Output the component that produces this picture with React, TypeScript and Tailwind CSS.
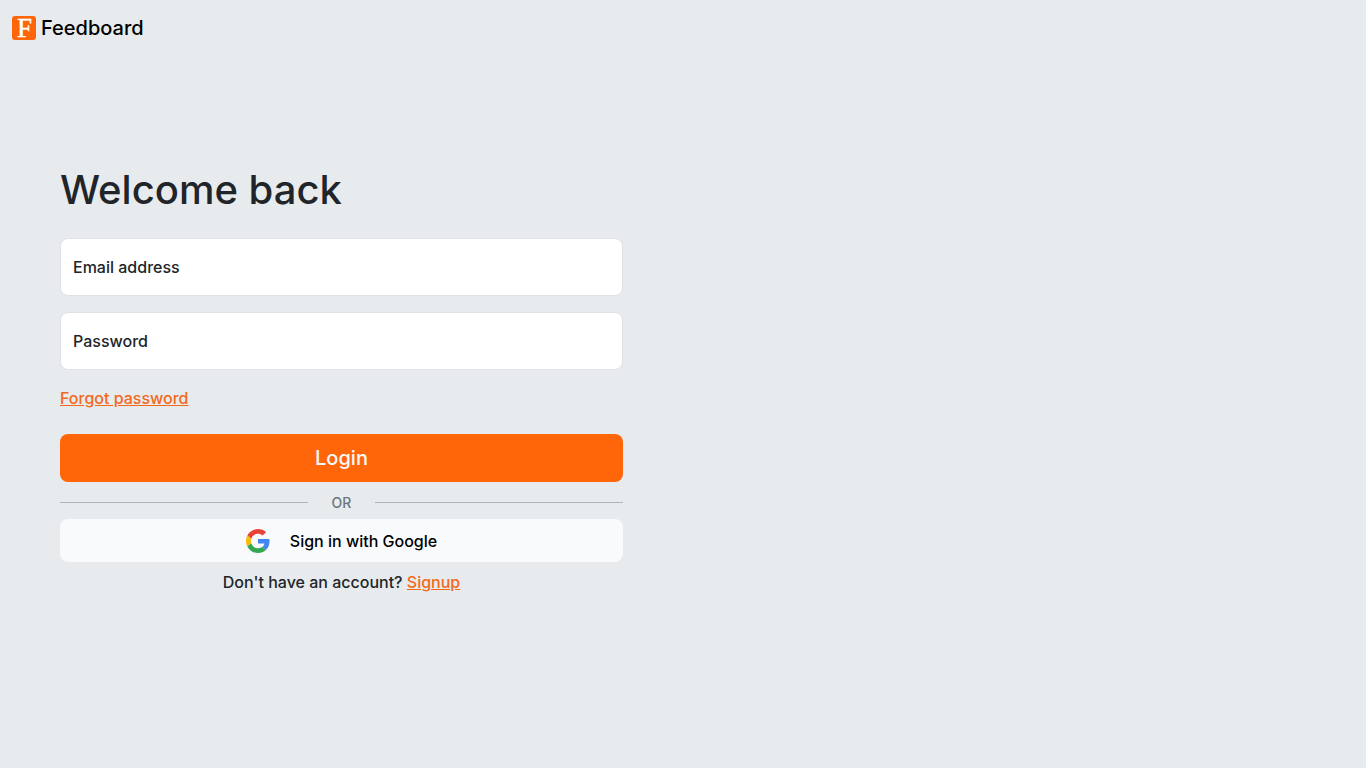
import { useId, useState } from "react";

function FeedboardLogo() {
  return (
    <svg className="size-6 overflow-visible" viewBox="0 0 24 24" aria-hidden="true">
      <rect width="24" height="24" rx="3" fill="#ff660a" />
      <text
        x="12.5"
        y="21"
        textAnchor="middle"
        fontSize="27"
        fill="#fff"
        stroke="#fff"
        strokeWidth="0.4"
        fontFamily="'Liberation Serif', serif"
      >
        F
      </text>
    </svg>
  );
}

function GoogleLogo() {
  return (
    <svg className="size-6" viewBox="0 0 48 48" aria-hidden="true">
      <path
        fill="#EA4335"
        d="M24 9.5c3.54 0 6.71 1.22 9.21 3.6l6.85-6.85C35.9 2.38 30.47 0 24 0 14.62 0 6.51 5.38 2.56 13.22l7.98 6.19C12.43 13.72 17.74 9.5 24 9.5z"
      />
      <path
        fill="#4285F4"
        d="M46.98 24.55c0-1.57-.15-3.09-.38-4.55H24v9.02h12.94c-.58 2.96-2.26 5.48-4.78 7.18l7.73 6c4.51-4.18 7.09-10.36 7.09-17.65z"
      />
      <path
        fill="#FBBC05"
        d="M10.53 28.59c-.48-1.45-.76-2.99-.76-4.59s.27-3.14.76-4.59l-7.98-6.19C.92 16.46 0 20.12 0 24c0 3.88.92 7.54 2.56 10.78l7.97-6.19z"
      />
      <path
        fill="#34A853"
        d="M24 48c6.48 0 11.93-2.13 15.89-5.81l-7.73-6c-2.15 1.45-4.92 2.3-8.16 2.3-6.26 0-11.57-4.22-13.47-9.91l-7.98 6.19C6.51 42.62 14.62 48 24 48z"
      />
    </svg>
  );
}

type FieldProps = { label: string; type: string; autoComplete: string };

function FloatingField({ label, type, autoComplete }: FieldProps) {
  const id = useId();
  const [value, setValue] = useState("");
  return (
    <div className="relative">
      <input
        id={id}
        type={type}
        autoComplete={autoComplete}
        value={value}
        onChange={(e) => setValue(e.target.value)}
        className="block h-[58px] w-full rounded-lg border border-[#dee2e6] bg-white px-3 pt-5 outline-none focus:border-[#ff660a]"
      />
      <label
        htmlFor={id}
        className={
          value
            ? "pointer-events-none absolute inset-x-[13px] top-1 text-sm"
            : "pointer-events-none absolute inset-x-[13px] inset-y-0 flex items-center"
        }
      >
        {label}
      </label>
    </div>
  );
}

export default function App() {
  return (
    <div className="flex min-h-screen flex-col bg-[#e7ebee] font-['Inter',sans-serif] text-base font-medium text-[#212529]">
      <header className="flex h-14 items-center px-3">
        <a href="#home" className="flex items-center gap-[5px] text-xl text-black">
          <FeedboardLogo />
          Feedboard
        </a>
      </header>
      <main className="flex flex-1 flex-col justify-center pb-16 md:w-1/2">
        <form className="flex flex-col px-[60px]" onSubmit={(e) => e.preventDefault()}>
          <h1 className="mb-6 text-[40px] leading-[48px] font-medium">Welcome back</h1>
          <div className="flex flex-col gap-4">
            <FloatingField label="Email address" type="email" autoComplete="email" />
            <FloatingField label="Password" type="password" autoComplete="current-password" />
          </div>
          <a href="#forgot" className="mt-4 mb-6 self-start text-[#f2691b] underline">
            Forgot password
          </a>
          <button type="submit" className="h-12 rounded-lg bg-[#ff660a] text-xl text-[#f8f9fa]">
            Login
          </button>
          <div className="flex h-[37px] items-center gap-6 pt-1 text-sm text-[#6c757d]">
            <span className="h-px flex-1 bg-[#b0b6bb]" />
            OR
            <span className="h-px flex-1 bg-[#b0b6bb]" />
          </div>
          <button
            type="button"
            className="flex h-[43px] items-center justify-center gap-5 rounded-lg bg-[#f8fafc] text-black"
          >
            <GoogleLogo />
            Sign in with Google
          </button>
          <p className="mt-2 text-center">
            Don't have an account?{" "}
            <a href="#signup" className="text-[#f2691b] underline">
              Signup
            </a>
          </p>
        </form>
      </main>
    </div>
  );
}
